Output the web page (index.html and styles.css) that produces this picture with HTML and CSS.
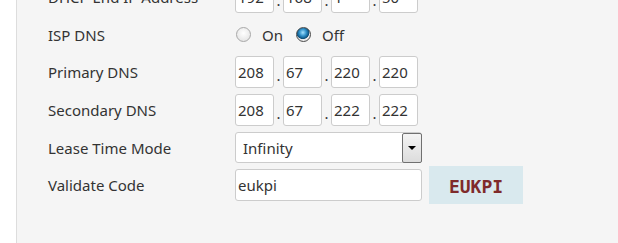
FILE: index.html
```html
<!DOCTYPE html>
<html>
<head>
<meta charset="utf-8">
<link rel="stylesheet" href="styles.css">
</head>
<body>
<div class="panel">
  <div class="form">
    <div class="row">
      <div class="label">DHCP End IP Address</div>
      <div class="ip">
        <input class="oct" value="192"><span class="dot">.</span><input class="oct" value="168"><span class="dot">.</span><input class="oct" value="1"><span class="dot">.</span><input class="oct" value="50">
      </div>
    </div>
    <div class="row short">
      <div class="label">ISP DNS</div>
      <div class="radios">
        <label class="opt"><input type="radio" name="isp" class="radio"><span>On</span></label>
        <label class="opt"><input type="radio" name="isp" class="radio" checked><span>Off</span></label>
      </div>
    </div>
    <div class="row">
      <div class="label">Primary DNS</div>
      <div class="ip">
        <input class="oct" value="208"><span class="dot">.</span><input class="oct" value="67"><span class="dot">.</span><input class="oct" value="220"><span class="dot">.</span><input class="oct" value="220">
      </div>
    </div>
    <div class="row">
      <div class="label">Secondary DNS</div>
      <div class="ip">
        <input class="oct" value="208"><span class="dot">.</span><input class="oct" value="67"><span class="dot">.</span><input class="oct" value="222"><span class="dot">.</span><input class="oct" value="222">
      </div>
    </div>
    <div class="row short">
      <div class="label">Lease Time Mode</div>
      <div class="select">
        <span class="select-text">Infinity</span>
        <span class="select-btn"><span class="arrow"></span></span>
      </div>
    </div>
    <div class="row">
      <div class="label">Validate Code</div>
      <input class="text" value="eukpi">
      <div class="captcha">EUKPI</div>
    </div>
  </div>
</div>
</body>
</html>
```

FILE: styles.css
```css
html, body {
  margin: 0;
  padding: 0;
  background: #ffffff;
  overflow: hidden;
}
body {
  font-family: "Noto Sans", "Open Sans", sans-serif;
  color: #333333;
}
.panel {
  display: flow-root;
  margin-left: 16px;
  border-left: 1px solid #dddddd;
  background: #f5f5f5;
  height: 100vh;
  padding-left: 31px;
}
.form {
  margin-top: -19px;
  display: flex;
  flex-direction: column;
  gap: 6px;
}
.row {
  display: flex;
  align-items: center;
  height: 32px;
}
.row.short {
  height: 31px;
}
.label {
  width: 187px;
  flex: none;
  font-size: 15px;
  color: #333333;
  white-space: nowrap;
}
.ip {
  display: flex;
  align-items: center;
}
.oct {
  width: 39px;
  height: 32px;
  box-sizing: border-box;
  border: 1px solid #cccccc;
  border-radius: 3px;
  background: #ffffff;
  font-family: "Noto Sans", sans-serif;
  font-size: 15px;
  color: #333333;
  padding: 0 2px;
  margin: 0;
  outline: none;
}
.dot {
  width: 9px;
  text-align: center;
  font-size: 15px;
  color: #333333;
  padding-top: 6px;
}
.radios {
  display: flex;
  align-items: center;
  margin-left: 1px;
}
.opt {
  display: flex;
  align-items: center;
  font-size: 15px;
  color: #333333;
  margin-right: 13px;
}
.opt span {
  margin-left: 11px;
}
.radio {
  appearance: none;
  -webkit-appearance: none;
  margin: 0;
  width: 15px;
  height: 15px;
  border-radius: 50%;
  border: 1px solid #a8a8a8;
  background: radial-gradient(circle at 50% 40%, #ffffff 0%, #e8e8e8 70%, #d4d4d4 100%);
  box-sizing: border-box;
}
.radio:checked {
  border: 1px solid #4a4a4a;
  background: radial-gradient(circle at 45% 35%, #a4e2ff 0%, #2e8fc8 32%, #0d4f7a 55%, #e8e8e8 62%, #f4f4f4 100%);
}
.select {
  width: 187px;
  height: 31px;
  box-sizing: border-box;
  border: 1px solid #cccccc;
  border-radius: 3px;
  background: #ffffff;
  display: flex;
  align-items: center;
  justify-content: space-between;
}
.select-text {
  font-size: 15px;
  color: #333333;
  padding-left: 7px;
}
.select-btn {
  width: 20px;
  height: 30px;
  box-sizing: border-box;
  border: 1px solid #707070;
  border-radius: 2px;
  background: linear-gradient(#f4f4f4, #dcdcdc);
  display: flex;
  align-items: center;
  justify-content: center;
  margin-right: -1px;
}
.arrow {
  width: 0;
  height: 0;
  border-left: 4px solid transparent;
  border-right: 4px solid transparent;
  border-top: 4px solid #000000;
}
.text {
  width: 187px;
  height: 32px;
  box-sizing: border-box;
  border: 1px solid #cccccc;
  border-radius: 3px;
  background: #ffffff;
  font-family: "Noto Sans", sans-serif;
  font-size: 15px;
  color: #333333;
  padding: 0 2px;
  margin: 0;
  outline: none;
}
.captcha {
  margin-left: 7px;
  width: 94px;
  height: 38px;
  background: #d9e9ee;
  color: #7f2a2a;
  font-family: "DejaVu Sans Mono", monospace;
  font-weight: bold;
  font-size: 18px;
  display: flex;
  align-items: center;
  justify-content: center;
  padding-top: 2px;
  box-sizing: border-box;
}
```
